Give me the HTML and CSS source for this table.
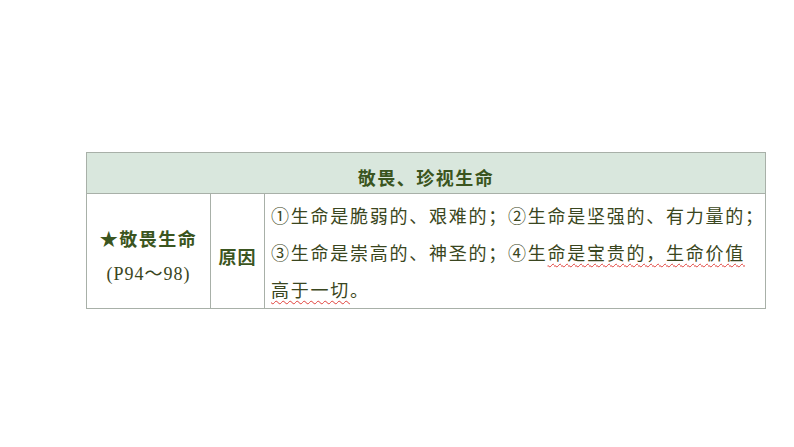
FILE: index.html
```html
<!DOCTYPE html>
<html lang="zh">
<head>
<meta charset="utf-8">
<link rel="stylesheet" href="styles.css">
</head>
<body>
<div class="page">
  <table class="tbl">
    <colgroup>
      <col class="col-topic">
      <col class="col-label">
      <col class="col-content">
    </colgroup>
    <tr>
      <th class="head" colspan="3">敬畏、珍视生命</th>
    </tr>
    <tr>
      <td class="topic">
        <div class="topic-title">★敬畏生命</div>
        <div class="topic-pages">(P94～98)</div>
      </td>
      <td class="label">原因</td>
      <td class="content">①生命是脆弱的、艰难的；②生命是坚强的、有力量的；<br>③生命是崇高的、神圣的；④生<span class="squiggle">命是宝贵的，生命价值</span><br><span class="squiggle">高于一切</span>。</td>
    </tr>
  </table>
</div>
</body>
</html>
```

FILE: styles.css
```css
html, body {
  margin: 0;
  padding: 0;
  background: #ffffff;
}
body {
  font-family: "Noto Sans CJK SC", "Noto Sans", sans-serif;
  color: #3a4620;
}
.page {
  width: 794px;
  height: 447px;
  padding: 152px 0 0 86px;
  box-sizing: border-box;
}
.tbl {
  border-collapse: collapse;
  width: 679px;
  table-layout: fixed;
}
.col-topic { width: 124px; }
.col-label { width: 54px; }
.col-content { width: 501px; }
.tbl td, .tbl th {
  border: 1px solid #a8b0a8;
  padding: 0;
}
.tbl .head {
  height: 41px;
  background: #d9e7dd;
  color: #3b5520;
  font-size: 18px;
  font-weight: bold;
  letter-spacing: 1.5px;
  text-align: center;
  vertical-align: middle;
  padding-top: 7px;
  box-sizing: border-box;
}
.tbl .topic {
  text-align: center;
  vertical-align: middle;
  padding-top: 10px;
}
.topic-title {
  font-size: 18px;
  font-weight: bold;
  color: #3b5520;
  letter-spacing: 1.5px;
  line-height: 36px;
}
.topic-pages {
  font-family: "Liberation Serif", "Noto Sans CJK SC", serif;
  font-size: 18px;
  letter-spacing: 1px;
  line-height: 36px;
  color: #3a4620;
}
.tbl .label {
  text-align: center;
  vertical-align: middle;
  padding-top: 10px;
  font-size: 18px;
  font-weight: bold;
  color: #3b5520;
  letter-spacing: 1px;
}
.tbl .content {
  font-size: 18px;
  letter-spacing: 1.75px;
  line-height: 37px;
  padding: 3px 0 0 6px;
  vertical-align: top;
  white-space: nowrap;
  overflow: hidden;
  color: #3a4620;
}
.squiggle {
  text-decoration: underline wavy #e0403a;
  text-decoration-thickness: 1px;
  text-underline-offset: 3px;
}
```
